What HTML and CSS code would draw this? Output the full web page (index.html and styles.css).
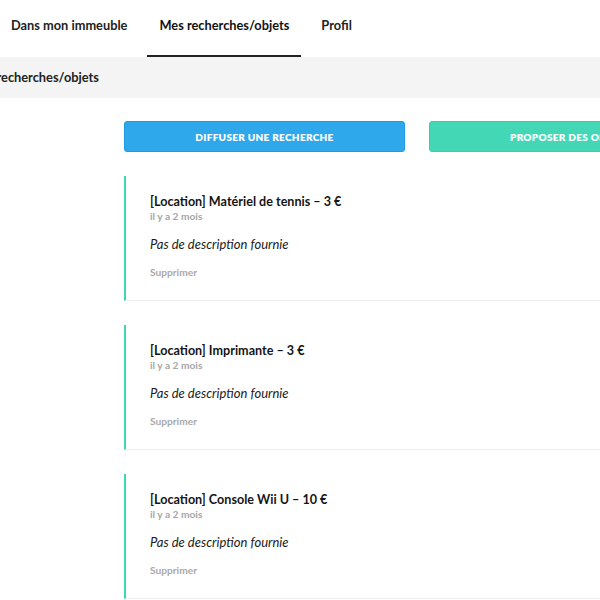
FILE: index.html
```html
<!DOCTYPE html>
<html lang="fr">
<head>
<meta charset="utf-8">
<title>Mes recherches/objets</title>
<link rel="stylesheet" href="styles.css">
</head>
<body>
<nav class="nav">
  <a class="tab">Dans mon immeuble</a>
  <a class="tab active">Mes recherches/objets</a>
  <a class="tab">Profil</a>
</nav>
<div class="band"><h1 class="band-title">Mes recherches/objets</h1></div>
<main class="content">
  <div class="actions">
    <button class="btn btn-blue">Diffuser une recherche</button>
    <button class="btn btn-green">Proposer des objets</button>
  </div>
  <div class="card">
    <div class="card-title">[Location] Matériel de tennis – 3 €</div>
    <div class="card-meta">il y a 2 mois</div>
    <div class="card-desc">Pas de description fournie</div>
    <div class="card-del">Supprimer</div>
  </div>
  <div class="card">
    <div class="card-title">[Location] Imprimante – 3 €</div>
    <div class="card-meta">il y a 2 mois</div>
    <div class="card-desc">Pas de description fournie</div>
    <div class="card-del">Supprimer</div>
  </div>
  <div class="card">
    <div class="card-title">[Location] Console Wii U – 10 €</div>
    <div class="card-meta">il y a 2 mois</div>
    <div class="card-desc">Pas de description fournie</div>
    <div class="card-del">Supprimer</div>
  </div>
</main>
</body>
</html>
```
FILE: styles.css
```css
html, body {
  margin: 0;
  padding: 0;
  overflow: hidden;
  background: #fff;
  font-family: "Lato", "Open Sans", sans-serif;
  color: #1c1c1c;
}
.nav {
  display: flex;
  gap: 8px;
  height: 57px;
  margin-left: -1px;
  background: #fff;
}
.tab {
  display: flex;
  align-items: center;
  padding: 0 12px 5px;
  font-size: 12.8px;
  font-weight: 700;
  color: #222;
  border-bottom: 2px solid transparent;
  box-sizing: border-box;
  height: 57px;
}
.tab.active {
  border-bottom-color: #222;
  color: #111;
}
.band {
  background: #f4f4f4;
  height: 41px;
  display: flex;
  align-items: center;
}
.band-title {
  margin: -1px 0 0 -31px;
  font-size: 12.8px;
  font-weight: 700;
  color: #222;
}
.content {
  margin-left: 124px;
  width: 586px;
  padding-top: 23px;
}
.actions {
  display: flex;
  gap: 24px;
  margin-bottom: 24px;
}
.btn {
  flex: 1;
  height: 31px;
  border-radius: 3px;
  font-family: inherit;
  font-size: 10px;
  font-weight: 800;
  letter-spacing: 0.3px;
  text-transform: uppercase;
  color: #fff;
  cursor: pointer;
}
.btn-blue {
  background: #2fa7eb;
  border: 1px solid #1f9be3;
}
.btn-green {
  background: #43d7b6;
  border: 1px solid #38cfac;
}
.card {
  border-left: 2px solid #3fd6b2;
  border-bottom: 1px solid #eeeeee;
  padding: 18px 0 21px 24px;
  margin-bottom: 24px;
}
.card-title {
  font-size: 12.6px;
  font-weight: 700;
  line-height: 16px;
  color: #151515;
}
.card-meta {
  font-size: 10.2px;
  font-weight: 700;
  line-height: 13px;
  color: #a6a6a6;
}
.card-desc {
  margin-top: 13px;
  font-size: 13px;
  font-style: italic;
  line-height: 16px;
  color: #1a1a1a;
}
.card-del {
  margin-top: 14px;
  font-size: 10.2px;
  font-weight: 700;
  line-height: 13px;
  color: #a9a9a9;
}
```
